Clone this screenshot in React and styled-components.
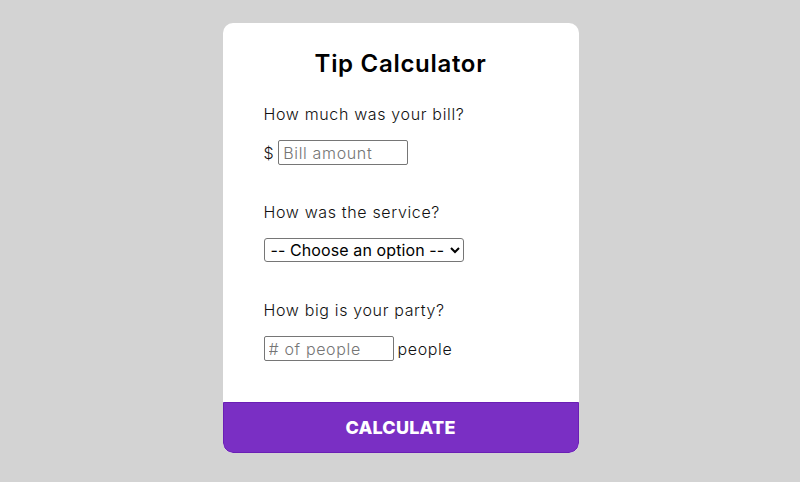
import React from "react";
import styled, { createGlobalStyle } from "styled-components";

const Global = createGlobalStyle`
  html, body { margin: 0; padding: 0; }
  body {
    background: #d3d3d3;
    font-family: "Inter", "Noto Sans", sans-serif;
    color: #111;
  }
`;

const Page = styled.div`
  width: 800px;
  height: 482px;
  display: flex;
  justify-content: center;
  padding: 23px 0 0 1px;
  box-sizing: border-box;
`;

const Card = styled.div`
  width: 356px;
  height: 430px;
  background: #fff;
  border-radius: 10px;
  display: flex;
  flex-direction: column;
  overflow: hidden;
`;

const Body = styled.div`
  flex: 1;
  padding: 0 41px;
  display: flex;
  flex-direction: column;
`;

const Title = styled.h1`
  margin: 26px 0 0;
  font-size: 24px;
  line-height: 30px;
  font-weight: 600;
  letter-spacing: 0.7px;
  text-align: center;
  color: #000;
`;

const Section = styled.div`
  display: flex;
  flex-direction: column;
  margin-top: ${(p) => p.$top}px;
`;

const Label = styled.p`
  margin: 0;
  font-size: 16px;
  line-height: 20px;
  font-weight: 300;
  letter-spacing: 0.65px;
  color: #111;
`;

const Row = styled.div`
  display: flex;
  align-items: center;
  gap: 4px;
  margin-top: 16px;
  font-size: 16px;
  font-weight: 300;
  letter-spacing: 0.65px;
`;

const Input = styled.input`
  width: 130px;
  height: 25px;
  box-sizing: border-box;
  border: 1px solid #767676;
  border-radius: 2px;
  padding: 1px 4px;
  font-family: inherit;
  font-size: 16px;
  font-weight: 300;
  letter-spacing: 0.65px;
  color: #111;
  &::placeholder { color: #757575; }
`;

const Select = styled.select`
  width: 200px;
  height: 24px;
  box-sizing: border-box;
  border: 1px solid #767676;
  border-radius: 3px;
  padding: 0 2px;
  font-family: inherit;
  font-size: 16px;
  font-weight: 400;
  letter-spacing: 0.1px;
  color: #000;
  background: #fff;
`;

const Button = styled.button`
  height: 51px;
  border: 1px solid #6a1fb5;
  border-radius: 0 0 10px 10px;
  background: #7a2fc4;
  color: #fff;
  font-family: inherit;
  font-size: 18px;
  font-weight: 800;
  letter-spacing: 0.2px;
  cursor: pointer;
`;

export default function App() {
  return (
    <>
      <Global />
      <Page>
        <Card>
          <Body>
            <Title>Tip Calculator</Title>
            <Section $top={25}>
              <Label>How much was your bill?</Label>
              <Row>
                <span>$</span>
                <Input placeholder="Bill amount" />
              </Row>
            </Section>
            <Section $top={37}>
              <Label>How was the service?</Label>
              <Row>
                <Select defaultValue="">
                  <option value="" disabled>-- Choose an option --</option>
                  <option value="0.3">30% - Outstanding</option>
                  <option value="0.2">20% - Good</option>
                  <option value="0.15">15% - It was OK</option>
                  <option value="0.1">10% - Bad</option>
                  <option value="0.05">5% - Terrible</option>
                </Select>
              </Row>
            </Section>
            <Section $top={38}>
              <Label>How big is your party?</Label>
              <Row>
                <Input placeholder="# of people" />
                <span>people</span>
              </Row>
            </Section>
          </Body>
          <Button>CALCULATE</Button>
        </Card>
      </Page>
    </>
  );
}
